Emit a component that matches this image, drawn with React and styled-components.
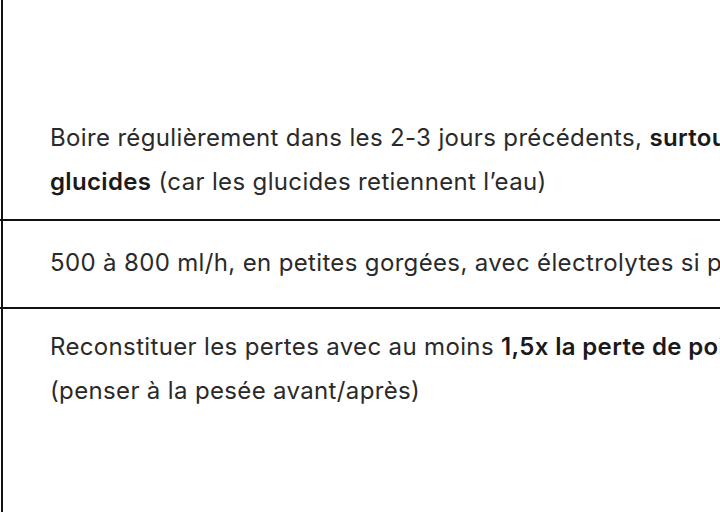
import React from "react";
import styled, { createGlobalStyle } from "styled-components";

const Global = createGlobalStyle`
  html, body { margin: 0; padding: 0; background: #fff; }
  body { overflow: hidden; width: 720px; height: 512px; }
`;

const Table = styled.div`
  width: 1300px;
  display: flex;
  flex-direction: column;
  font-family: Inter, "Noto Sans", sans-serif;
  font-size: 24px;
  letter-spacing: 0.35px;
  line-height: 44px;
  color: #2a2a2a;
`;

const Row = styled.div`
  display: grid;
  grid-template-columns: 3px 1fr;
  border-bottom: ${(p) => (p.$last ? "none" : "2px solid #111")};
  min-height: ${(p) => p.$minHeight || 0}px;
`;

const Side = styled.div`
  border-right: 2px solid #111;
`;

const Cell = styled.div`
  padding: ${(p) => p.$pt}px 20px ${(p) => p.$pb}px 47px;
  white-space: nowrap;
`;

const B = styled.strong`
  font-weight: 600;
  color: #1a1a1a;
`;

export default function App() {
  return (
    <>
      <Global />
      <Table>
        <Row>
          <Side />
          <Cell $pt={116} $pb={15}>
            Boire régulièrement dans les 2-3 jours précédents,{" "}
            <B>surtout avec un apport riche en</B>
            <br />
            <B>glucides</B> (car les glucides retiennent l’eau)
          </Cell>
        </Row>
        <Row>
          <Side />
          <Cell $pt={20} $pb={22}>
            500 à 800 ml/h, en petites gorgées, avec électrolytes si possible
          </Cell>
        </Row>
        <Row $last $minHeight={260}>
          <Side />
          <Cell $pt={16} $pb={40}>
            Reconstituer les pertes avec au moins <B>1,5x la perte de poids</B>
            <br />
            (penser à la pesée avant/après)
          </Cell>
        </Row>
      </Table>
    </>
  );
}
